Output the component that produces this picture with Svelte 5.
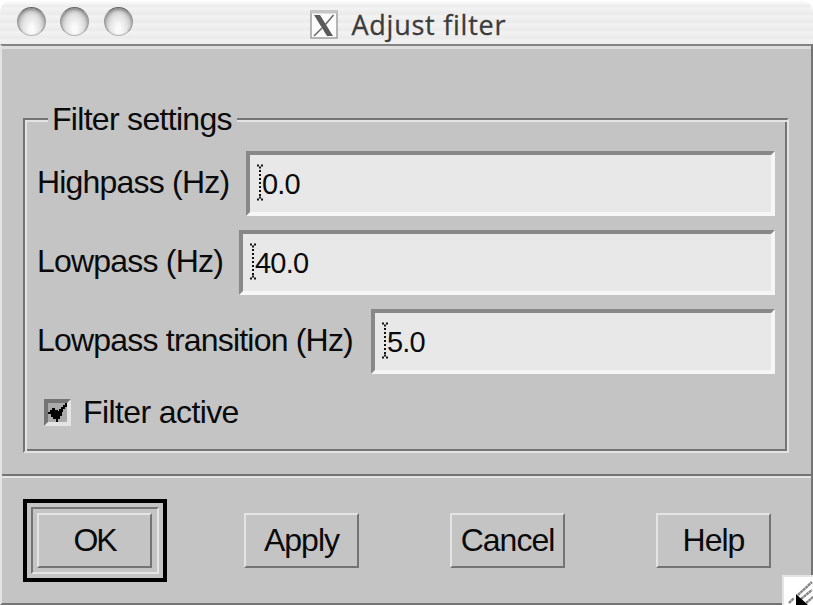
<script>
  const fields = [
    { label: 'Highpass (Hz)', value: '0.0', left: 246 },
    { label: 'Lowpass (Hz)', value: '40.0', left: 239 },
    { label: 'Lowpass transition (Hz)', value: '5.0', left: 371 }
  ];
  const buttons = ['Apply', 'Cancel', 'Help'];
</script>

<div class="window">
  <header>
    <div class="lights"><i></i><i></i><i></i></div>
    <div class="title">
      <svg width="30" height="30" viewBox="0 0 30 30">
        <rect x="2" y="1" width="26" height="27" fill="#fcfcfc" stroke="#999" stroke-width="1.4" />
        <rect x="1.500" y="0" width="27" height="3.5" fill="#c6c6c6" />
        <path d="M5 5H11L24 26H18Z" fill="#5a5a5a" />
        <path d="M24.500 5L16 15M13 18L5 26" stroke="#666" stroke-width="1.5" fill="none" />
      </svg>
      <span>Adjust filter</span>
    </div>
  </header>

  <main>
    <section class="settings">
      <div class="frame">
        <div class="legend"><span>Filter settings</span></div>
        {#each fields as field}
          <div class="row">
            <label style:width="{field.left - 37}px">{field.label}</label>
            <div class="field">
              <svg class="caret" width="8" height="37" viewBox="0 0 8 37">
                <path d="M1 1.500H3M5 1.500H7M3 3.500H5M3 33.500H5M1 35.500H3M5 35.500H7" stroke="#111" stroke-width="2" />
                <path d="M4 6V32" stroke="#111" stroke-width="2" stroke-dasharray="2 2" />
              </svg>
              <span>{field.value}</span>
            </div>
          </div>
        {/each}
        <div class="check">
          <div class="box">
            <svg width="27" height="27" viewBox="0 0 27 27">
              <path d="M4 13H6V11H8V9H11V11H14V12H15V10H17V8H19V6H21V4H23V8H21V10H19V13H18V17H16V20H14V23H12V20H9V18H7V15H4Z" fill="#000" />
            </svg>
          </div>
          <span>Filter active</span>
        </div>
      </div>
    </section>

    <footer>
      <div class="default"><div class="well"><button class="ok">OK</button></div></div>
      {#each buttons as name}
        <button class={name.toLowerCase()}>{name}</button>
      {/each}
    </footer>
  </main>

  <svg class="grip" width="31" height="30" viewBox="0 0 31 30">
    <rect width="31" height="30" fill="#e4e4e4" />
    <rect x="2" y="2" width="29" height="28" fill="#fff" />
    <path d="M7 28L12 23M16 20L30 7M19 24L30 15M24 28L31 22" stroke="#858585" stroke-width="2.4" stroke-dasharray="3 .4" />
    <path d="M14 19L26 30H14Z" fill="#000" />
  </svg>
</div>

<style>
  * { box-sizing: border-box; }
  :global(body) { background: #fff; }
  .window {
    position: relative;
    width: 813px;
    height: 605px;
    overflow: hidden;
    font: 32px/36px "Liberation Sans", Arial, sans-serif;
    letter-spacing: -0.8px;
    color: #0a0a0a;
  }
  header {
    position: relative;
    height: 44px;
    display: flex;
    border-radius: 13px 13px 0 0;
    background:
      linear-gradient(#fff, transparent 6px),
      repeating-linear-gradient(#f2f2f2 0 1px, #ededed 4px, #ebebeb 6px, #f2f2f2 8px);
  }
  .lights { display: flex; gap: 14.500px; padding: 7px 0 0 16.500px; width: 309px; }
  .lights i {
    flex: none;
    width: 29px;
    height: 29px;
    border-radius: 50%;
    border: 1.500px solid #999;
    border-top-color: #666;
    border-bottom-color: #b5b5b5;
    background: radial-gradient(ellipse at 50% 78%, #fafafa 0 12%, #e4e4e4 45%, #bbb 78%);
    box-shadow: inset 0 2px 3px #8a8a8a;
  }
  .title {
    display: flex;
    gap: 12.500px;
    padding-top: 10px;
    font: 27px/29px "Open Sans", "Noto Sans", sans-serif;
    font-weight: 500;
    color: #3c3c3c;
    -webkit-text-stroke: 0.3px #3c3c3c;
    letter-spacing: 0.75px;
    white-space: nowrap;
  }
  main {
    height: 561px;
    display: flex;
    flex-direction: column;
    background: #c4c4c4;
    border-top: 2px solid #848484;
    border-right: 2px solid #747474;
    border-bottom: 2px solid #747474;
    border-left: 2px solid #e3e3e3;
    box-shadow: inset 0 3px #dedede;
  }
  .settings {
    height: 432px;
    padding: 72px 22px 0 21px;
    border-bottom: 2px solid #e4e4e4;
    box-shadow: inset 0 -2px #747474;
  }
  .frame {
    height: 335px;
    border: 2px solid;
    border-color: #747474 #e3e3e3 #e3e3e3 #747474;
    box-shadow: inset 2px 2px #e3e3e3, inset -2px -2px #747474;
    padding: 0 12px;
  }
  .legend { height: 31px; letter-spacing: -0.7px; }
  .legend span {
    display: block;
    width: 189px;
    height: 34px;
    margin-left: 11px;
    padding-left: 4px;
    background: #c4c4c4;
    transform: translateY(-19px);
    white-space: nowrap;
  }
  .row { display: flex; height: 65px; margin-bottom: 14px; }
  label { flex: none; line-height: 63px; white-space: nowrap; }
  .field {
    flex: 1;
    display: flex;
    align-items: center;
    border: 4px solid;
    border-color: #888 #f6f6f6 #f6f6f6 #888;
    background: #e8e8e8;
    padding-left: 6px;
    font-size: 29px;
  }
  .field .caret { flex: none; margin-bottom: 3px; }
  .field span { margin-left: -2px; }
  .check { display: flex; align-items: center; height: 36px; padding-left: 7px; margin-top: 20px; letter-spacing: -0.6px; }
  .box { width: 27px; height: 27px; margin-right: 12px; border: 4px solid; border-color: #747474 #e4e4e4 #e4e4e4 #747474; background: #aaa; }
  .box svg { display: block; margin: -4px; }
  footer { flex: 1; display: flex; padding: 21px 0 0 21px; }
  .default { width: 144px; height: 83px; border: 4px solid #000; padding: 4px; }
  .well { width: 128px; height: 67px; padding: 4px; border: 2px solid; border-color: #747474 #e4e4e4 #e4e4e4 #747474; }
  button {
    width: 115px;
    height: 55px;
    padding: 0 0 2px;
    border: 2px solid;
    border-color: #e4e4e4 #747474 #747474 #e4e4e4;
    border-radius: 0;
    background: #c4c4c4;
    font: inherit;
    letter-spacing: -1px;
    color: inherit;
    margin-top: 14px;
  }
  .ok { margin: 0; display: block; letter-spacing: -2px; }
  .apply { margin-left: 77px; }
  .cancel, .help { margin-left: 91px; }
  .grip { position: absolute; right: 0; bottom: 0; }
</style>
